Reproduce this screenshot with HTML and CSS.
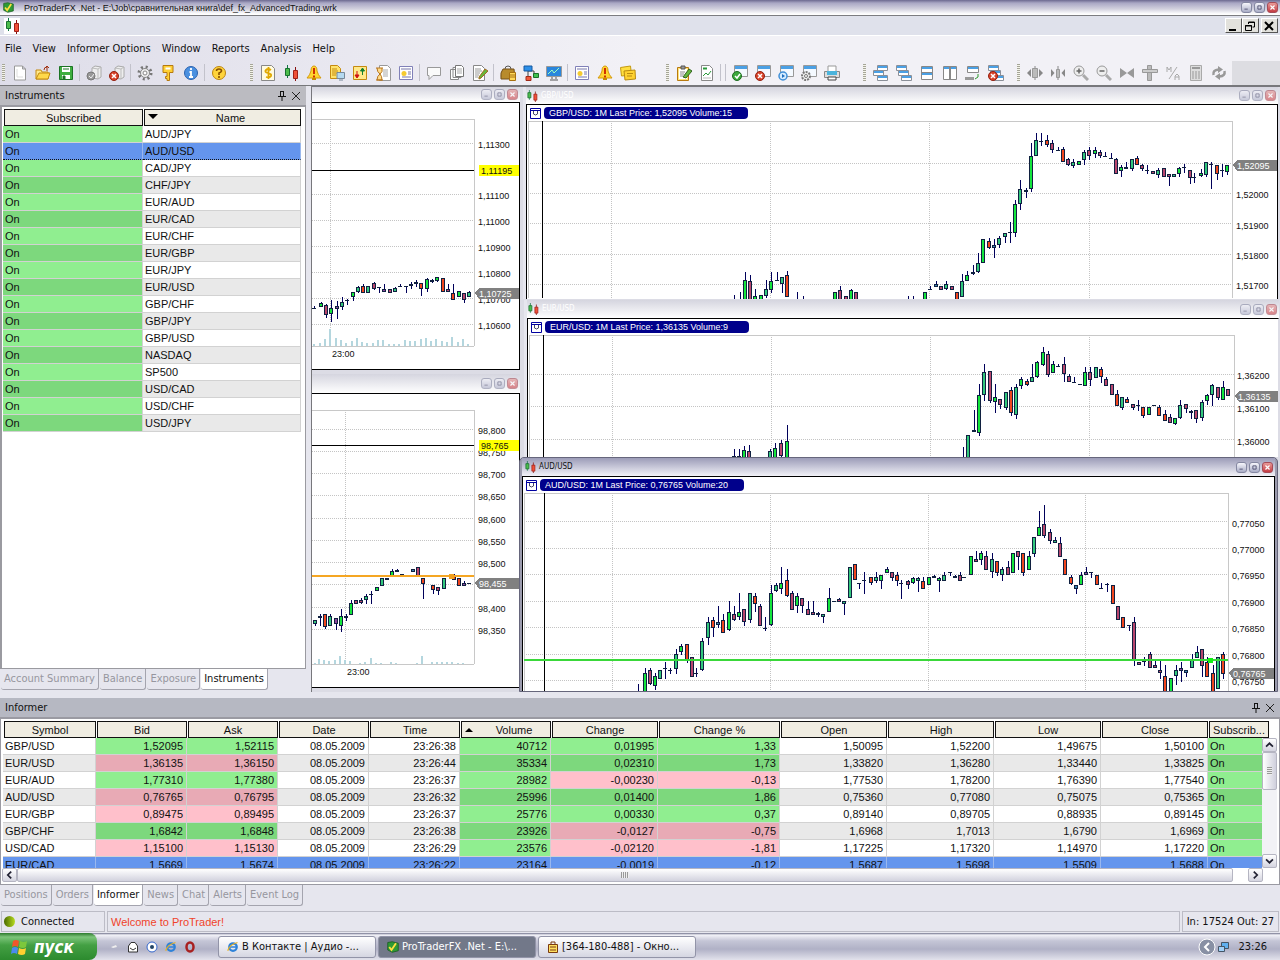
FILE: index.html
```
<!DOCTYPE html>
<html lang="en">

<head>
  <meta charset="UTF-8">
  <meta name="viewport" content="width=device-width, initial-scale=1.0">
  <title>ProTraderFX .Net</title>
  <link rel="stylesheet" href="styles.css">
</head>

<body>
  <svg class="sprite" aria-hidden="true">
    <symbol id="i-doc" viewBox="0 0 16 16"><path d="M2.5 1h8l3 3v11h-11zM10.5 1v3h3" fill="#fff" stroke="#999"/><path d="M5 4v8h6" fill="none" stroke="#ddd"/></symbol>
    <symbol id="i-open" viewBox="0 0 16 16"><path d="M1 14V5h5l1 2h6v7z" fill="#ffe98a" stroke="#c48a10"/><path d="M1 14l3-6h11l-2 6z" fill="#ffd84a" stroke="#c48a10"/><path d="M9 5q0-3 3-3M12 6V1M10 3l2-2 2 2" fill="none" stroke="#a03010"/></symbol>
    <symbol id="i-save" viewBox="0 0 16 16"><path d="M1.5 1.5h13v13h-13z" fill="#3fae3f" stroke="#1c7424"/><path d="M4 2h8v5H4zM4 10h8v4H4z" fill="#fff"/><path d="M5 4h6M5 11h2v3H5z" stroke="#1c7424" fill="#1c7424"/></symbol>
    <symbol id="i-db" viewBox="0 0 16 16"><path d="M6 3l3-2 6 1v10l-3 2-6-1z" fill="#eee" stroke="#aaa"/><path d="M6 3l6 1 3-2M12 4v10" fill="none" stroke="#bbb"/></symbol>
    <symbol id="i-ok-gray" viewBox="0 0 16 16"><use href="#i-db"/><circle cx="5" cy="11" r="4" fill="#999" stroke="#777"/><path d="M3 11l2 2 3-4" fill="none" stroke="#eee"/></symbol>
    <symbol id="i-stop" viewBox="0 0 16 16"><use href="#i-db"/><use href="#b-x"/></symbol>
    <symbol id="b-x" viewBox="0 0 16 16"><circle cx="5" cy="11" r="4.5" fill="#d8432a" stroke="#932010"/><path d="M3 9l4 4M7 9l-4 4" stroke="#fff" stroke-width="1.5"/></symbol>
    <symbol id="i-gear" viewBox="0 0 16 16"><circle cx="8" cy="8" r="6" fill="none" stroke="#777" stroke-width="3" stroke-dasharray="2 2.7"/><circle cx="8" cy="8" r="4.5" fill="#eee" stroke="#888"/><circle cx="8" cy="8" r="2" fill="#fff" stroke="#888"/></symbol>
    <symbol id="i-key" viewBox="0 0 16 16"><path d="M3 .5h10v7H9.5v8H7v-2H5.5v-2H7v-4H3z" fill="#ffd034" stroke="#b67a10"/><path d="M5.5 3.5h5" stroke="#fff" stroke-width="2"/></symbol>
    <symbol id="i-info" viewBox="0 0 16 16"><circle cx="8" cy="8" r="6.5" fill="#4a90e0" stroke="#2b62ae"/><path d="M8 3v2M6.5 7H8v5M6 12h4" stroke="#fff" stroke-width="1.8" fill="none"/></symbol>
    <symbol id="i-help" viewBox="0 0 16 16"><circle cx="8" cy="8" r="6.5" fill="#ffd43c" stroke="#bd8510"/><path d="M5.5 6q0-2 2.5-2t2.5 2Q10 7.5 8 8v2M8 11v2" stroke="#875000" stroke-width="1.6" fill="none"/></symbol>
    <symbol id="i-dollar" viewBox="0 0 16 16"><path d="M1.5.5h10l3 3v12h-13z" fill="#fffbe0" stroke="#888"/><path d="M11 5Q8 3 6 5t2 3 3 3-5 1M8.5 2v12" fill="none" stroke="#e0a800" stroke-width="1.8"/></symbol>
    <symbol id="i-candles" viewBox="0 0 16 16"><path d="M4.5 0v13" stroke="#174"/><path d="M2.5 3.5h4v7h-4z" fill="#4cbc4c" stroke="#187030"/><path d="M12.5 2v14" stroke="#811"/><path d="M10.5 5.5h4v8h-4z" fill="#f05038" stroke="#a02018"/></symbol>
    <symbol id="i-bell" viewBox="0 0 16 16"><path d="M8 1q3 0 3 5 1 4 4 7H1q3-3 4-7 0-5 3-5z" fill="#ffd630" stroke="#d59a10"/><path d="M6 14h4" stroke="#c88a00" stroke-width="2"/><path d="M8 3v6M8 10.5v2" stroke="#d03000" stroke-width="2"/></symbol>
    <symbol id="i-quote" viewBox="0 0 16 16"><path d="M1.5.5h7l3 3v10h-10z" fill="#ffe36a" stroke="#c58a10"/><path d="M3 4h5M3 6h6M3 8h5M3 10h4" stroke="#c58a10"/><path d="M8 7.5h7.5v6H8z" fill="#b5d9f0" stroke="#789"/><path d="M10 15h4" stroke="#789"/></symbol>
    <symbol id="i-updown" viewBox="0 0 16 16"><path d="M1.5 1.5h13v13h-13z" fill="#ffe98a" stroke="#c58a10"/><path d="M5 6v6M3 10l2 3 2-3z" stroke="#d01010" fill="#d01010"/><path d="M10.5 10V5M8.5 6l2-3 2 3z" stroke="#138030" fill="#138030"/></symbol>
    <symbol id="i-glass" viewBox="0 0 16 16"><path d="M4.5.5h8l3 3v12h-11z" fill="#fff" stroke="#999"/><path d="M8 5h5M8 7h5M8 9h5M8 11h5" stroke="#aaa"/><path d="M1 3h7M1 15h7M2 3q0 4 3 6-3 2-3 6h5q0-4-2-6 3-2 2-6" fill="#ffdc8a" stroke="#b8741c"/></symbol>
    <symbol id="i-news" viewBox="0 0 16 16"><path d="M1.5 1.5h13v13h-13z" fill="#fff" stroke="#8080b8"/><path d="M3 4h10M10 7h3M10 9h3M4 12h9" stroke="#7777aa"/><circle cx="6" cy="8.5" r="2.5" fill="#f5cb30"/></symbol>
    <symbol id="i-chat" viewBox="0 0 16 16"><path d="M1.5 2.5h13v8H7l-4 4v-4H1.5z" fill="#fafafa" stroke="#999"/></symbol>
    <symbol id="i-docs" viewBox="0 0 16 16"><path d="M1.5 4.5h8v10h-8zM4 2.5h8v10H4z" fill="#fff" stroke="#888"/><path d="M6.5.5h6l2 2v9h-8z" fill="#fff" stroke="#777"/><path d="M8 4h5M8 6h5M8 8h5" stroke="#aaa"/></symbol>
    <symbol id="i-edit" viewBox="0 0 16 16"><path d="M1.5.5h8l3 3v12h-11z" fill="#fff" stroke="#888"/><path d="M3 4h6M3 6h7M3 8h5M3 10h4M3 12h3" stroke="#999"/><path d="M7 12l6-8 3 2-7 7-2 1z" fill="#63b83c" stroke="#a36a20"/></symbol>
    <symbol id="i-purse" viewBox="0 0 16 16"><path d="M5 4q0-3 3-3t3 3" fill="none" stroke="#555"/><path d="M3 4h11l1 10H1q-1-7 2-10z" fill="#b88b2c" stroke="#75501a"/><path d="M9.5 7.5h6v8h-6z" fill="#ffd95a" stroke="#a87010"/><path d="M10 10h5M10 12h5" stroke="#a87010"/></symbol>
    <symbol id="i-nodes" viewBox="0 0 16 16"><path d="M5 4v9M5 6h6v5" fill="none" stroke="#444"/><path d="M1 1h8v5H1z" fill="#2c8fe8" stroke="#1558a0"/><path d="M10.5 8.5h5v4h-5z" fill="#40c050" stroke="#187028"/><path d="M3 11.5h5v4H3z" fill="#f05a3c" stroke="#a02a18"/></symbol>
    <symbol id="i-monitor" viewBox="0 0 16 16"><path d="M.5 1.5h15v10H.5z" fill="#2a86dc" stroke="#999"/><path d="M2 9l4-4 2 3 5-5" fill="none" stroke="#9fffc0"/><path d="M6 12v2M10 12v2M4 15h8" stroke="#555"/></symbol>
    <symbol id="i-notes" viewBox="0 0 16 16"><path d="M.5 2.5l10-1.5 1 9-10 1z" fill="#ffdf40" stroke="#c49a10"/><path d="M4 6l11-1 .5 9-10.5 1z" fill="#ffd230" stroke="#b98b10"/><path d="M7 8.5h6M7 11h5" stroke="#b98b10"/></symbol>
    <symbol id="i-clip" viewBox="0 0 16 16"><path d="M1.5 2.5h11v13h-11z" fill="#ffe37a" stroke="#b87a10"/><path d="M3 4h8v10H3z" fill="#fff"/><path d="M5 1h4v3H5z" fill="#999" stroke="#555"/><path d="M4 7h5M4 9h4M4 11h3" stroke="#888"/><path d="M7 12l6-8 3 2-6 7z" fill="#63b83c" stroke="#336020"/></symbol>
    <symbol id="i-report" viewBox="0 0 16 16"><path d="M2.5.5h8l3 3v12h-11z" fill="#fff" stroke="#888"/><path d="M4 3.5h4" stroke="#2a9a3a" stroke-width="2"/><path d="M4 11l3-3 2 2 3-4" fill="none" stroke="#2a9a3a"/><path d="M4 13h8" stroke="#bbb"/></symbol>
    <symbol id="i-win" viewBox="0 0 16 16"><path d="M2.5.5h13v11h-13z" fill="#f4f9ff" stroke="#999"/><path d="M3 1h12v3H3z" fill="#4ba0e4"/></symbol>
    <symbol id="i-win-ok" viewBox="0 0 16 16"><use href="#i-win"/><circle cx="5" cy="11" r="4.5" fill="#3ca83c" stroke="#1d6c20"/><path d="M3 11l2 2 3-4" fill="none" stroke="#fff" stroke-width="1.5"/></symbol>
    <symbol id="i-win-x" viewBox="0 0 16 16"><use href="#i-win"/><use href="#b-x"/></symbol>
    <symbol id="i-win-play" viewBox="0 0 16 16"><use href="#i-win"/><circle cx="5" cy="11" r="4" fill="#d6ecff" stroke="#3f8fd8" stroke-width="1.5"/><path d="M4 9l3 2-3 2z" fill="#2070c0"/></symbol>
    <symbol id="i-win-gear" viewBox="0 0 16 16"><use href="#i-win"/><circle cx="5" cy="11" r="4" fill="#eee" stroke="#777" stroke-width="2" stroke-dasharray="2 1"/><circle cx="5" cy="11" r="1.5" fill="#fff" stroke="#777"/></symbol>
    <symbol id="i-print" viewBox="0 0 16 16"><path d="M4 6V1h8v5" fill="#fff" stroke="#999"/><path d="M.5 6.5h15v6H.5z" fill="#ddd" stroke="#888"/><path d="M3 6h10v4H3z" fill="#4bb4dc"/><path d="M4 12h8v3H4z" fill="#fff" stroke="#444"/></symbol>
    <symbol id="i-mini" viewBox="0 0 11 6"><path d="M.5.5h10v5H.5z" fill="#fff" stroke="#8a8f98"/><path d="M1 1h9v2H1z" fill="#4ba0e4"/></symbol>
    <symbol id="i-cascade" viewBox="0 0 16 16"><use href="#i-mini" x="4" y="0" width="11" height="6"/><use href="#i-mini" x="0" y="5" width="11" height="6"/><use href="#i-mini" x="4" y="10" width="11" height="6"/></symbol>
    <symbol id="i-cascade2" viewBox="0 0 16 16"><use href="#i-mini" x="0" y="0" width="11" height="6"/><use href="#i-mini" x="2" y="5" width="11" height="6"/><use href="#i-mini" x="5" y="10" width="11" height="6"/></symbol>
    <symbol id="i-tileh" viewBox="0 0 16 16"><path d="M2.5 1.5h11v13h-11z" fill="#fff" stroke="#888"/><path d="M3 3h10M3 9h10" stroke="#4ba0e4" stroke-width="2"/><path d="M3 7.5h10" stroke="#888"/></symbol>
    <symbol id="i-tilev" viewBox="0 0 16 16"><path d="M1.5 1.5h13v13h-13z" fill="#fff" stroke="#888"/><path d="M2 3h12" stroke="#4ba0e4" stroke-width="2"/><path d="M8 2v12" stroke="#888" stroke-width="2"/></symbol>
    <symbol id="i-restore" viewBox="0 0 16 16"><path d="M2.5 1.5h11v6h-11z" fill="#fff" stroke="#888"/><path d="M3 3h10" stroke="#4ba0e4" stroke-width="2"/><path d="M0 13.5h9" stroke="#999" stroke-width="3"/><path d="M13 9v3l-3 2" fill="none" stroke="#2c9a2c"/></symbol>
    <symbol id="i-closeall" viewBox="0 0 16 16"><use href="#i-cascade2"/><use href="#b-x"/></symbol>
    <symbol id="i-wide" viewBox="0 0 16 16"><path d="M8 1v14" stroke="#888"/><path d="M5.5 3.5h5v9h-5z" fill="#bbb" stroke="#999"/><path d="M0 8l4-4v8zM16 8l-4-4v8z" fill="#888"/></symbol>
    <symbol id="i-narrow" viewBox="0 0 16 16"><path d="M8 1v14" stroke="#888"/><path d="M6.5 4.5h3v8h-3z" fill="#bbb" stroke="#999"/><path d="M4.5 8L1 4v8zM11.5 8L15 4v8z" fill="#888"/></symbol>
    <symbol id="i-zoomin" viewBox="0 0 16 16"><circle cx="6" cy="6" r="5" fill="#eee" stroke="#999"/><path d="M3.5 6h5M6 3.5v5" stroke="#666" stroke-width="1.5"/><path d="M10 10l5 5" stroke="#aaa" stroke-width="3"/></symbol>
    <symbol id="i-zoomout" viewBox="0 0 16 16"><circle cx="6" cy="6" r="5" fill="#eee" stroke="#999"/><path d="M3.5 6h5" stroke="#666" stroke-width="1.5"/><path d="M10 10l5 5" stroke="#aaa" stroke-width="3"/></symbol>
    <symbol id="i-meet" viewBox="0 0 16 16"><path d="M1 3l7 5-7 5zM15 3L8 8l7 5z" fill="#999"/></symbol>
    <symbol id="i-cross" viewBox="0 0 16 16"><path d="M5.5.5h4v15h-4z" fill="#bbb" stroke="#999"/><path d="M.5 4.5h15v3H.5z" fill="#ccc" stroke="#999"/></symbol>
    <symbol id="i-ma" viewBox="0 0 16 16"><path d="M2 7V2l2 3 2-3v5M12 2L4 14M10 15v-4l2-2 2 2v4M10 12h4" fill="none" stroke="#aaa"/></symbol>
    <symbol id="i-calc" viewBox="0 0 16 16"><path d="M2.5.5h11v15h-11z" fill="#ddd" stroke="#aaa"/><path d="M4 3h8" stroke="#999" stroke-width="2"/><path d="M4 7h8M4 9h8M4 11h8M4 13h8" stroke="#999" stroke-dasharray="2 1"/></symbol>
    <symbol id="i-refresh" viewBox="0 0 16 16"><path d="M2.5 10q-1-5 5-5.5M13.5 6q1 5-5 5.5" fill="none" stroke="#999" stroke-width="2.5"/><path d="M7 1l5 3.5L7 8zM9 8l-5 3.5L9 15z" fill="#999"/></symbol>
    <symbol id="i-app" viewBox="0 0 16 16"><path d="M1 2l6-1 8 2v10l-8 2-6-3z" fill="#2f9a35" stroke="#14581a"/><path d="M3 8l3 4 6-9" fill="none" stroke="#ffe040" stroke-width="2.5"/></symbol>
    <symbol id="i-ie" viewBox="0 0 16 16"><circle cx="8" cy="8" r="5" fill="none" stroke="#2f82d8" stroke-width="3"/><path d="M4 8h9" stroke="#2f82d8" stroke-width="2"/><path d="M1 13Q3 5 14 2" fill="none" stroke="#e8b020" stroke-width="1.5"/></symbol>
    <symbol id="i-pin" viewBox="0 0 10 10"><path d="M3 .5h4M3.5 0v5M6.5 0v5M1 5.5h8M5 6v4" fill="none" stroke="#111"/></symbol>
    <symbol id="i-close" viewBox="0 0 10 10"><path d="M1 1l8 8M9 1L1 9" stroke="#222"/></symbol>
    <symbol id="c-min" viewBox="0 0 11 11"><path d="M3 7.5h4" stroke="#446"/></symbol>
    <symbol id="c-max" viewBox="0 0 11 11"><path d="M3.5 3.5h4v4h-4z" fill="none" stroke="#446"/></symbol>
    <symbol id="c-close" viewBox="0 0 11 11"><path d="M3 3l5 5M8 3L3 8" stroke="#fff" stroke-width="1.5"/></symbol>
    <symbol id="i-menu" viewBox="0 0 11 11"><path d="M.5.5h10v10H.5z" fill="#fff" stroke="#0000a0"/><path d="M1 2.5h9" stroke="#0000a0"/><path d="M3.5 3v3q2 2 4 0V3" fill="none" stroke="#446"/></symbol>
  </svg>

  <header class="titlebar">
    <svg class="app-icon"><use href="#i-app"/></svg>
    <h1>ProTraderFX .Net - E:\Job\сравнительная книга\def_fx_AdvancedTrading.wrk</h1>
    <div class="caps">
      <button class="cap" aria-label="Minimize"><svg><use href="#c-min"/></svg></button>
      <button class="cap" aria-label="Restore"><svg><use href="#c-max"/></svg></button>
      <button class="cap cap-close" aria-label="Close"><svg><use href="#c-close"/></svg></button>
    </div>
  </header>

  <div class="childbar">
    <span class="child-icon"><svg class="icon"><use href="#i-candles"/></svg></span>
    <div class="classic-caps">
      <button aria-label="Minimize child"><svg viewBox="0 0 14 12"><path d="M3 10h7" stroke="#000" stroke-width="2"/></svg></button>
      <button aria-label="Restore child"><svg viewBox="0 0 14 12"><path d="M5.5 4V2h6v5h-2M5 2.5h7M2.5 5.5h6v5h-6zM2 6h7" fill="none" stroke="#000"/></svg></button>
      <button class="apart" aria-label="Close child"><svg viewBox="0 0 14 12"><path d="M3 2l8 8M11 2l-8 8" stroke="#000" stroke-width="2"/></svg></button>
    </div>
  </div>

  <nav class="menu">
    <button>File</button>
    <button>View</button>
    <button>Informer Options</button>
    <button>Window</button>
    <button>Reports</button>
    <button>Analysis</button>
    <button>Help</button>
  </nav>

  <div class="toolbar">
    <div class="tools">
      <button aria-label="New"><svg class="icon"><use href="#i-doc"/></svg></button>
      <button aria-label="Open"><svg class="icon"><use href="#i-open"/></svg></button>
      <button aria-label="Save"><svg class="icon"><use href="#i-save"/></svg></button>
      <i></i>
      <button aria-label="Connect"><svg class="icon"><use href="#i-ok-gray"/></svg></button>
      <button aria-label="Disconnect"><svg class="icon"><use href="#i-stop"/></svg></button>
      <i></i>
      <button aria-label="Settings"><svg class="icon"><use href="#i-gear"/></svg></button>
      <button aria-label="Password"><svg class="icon"><use href="#i-key"/></svg></button>
      <button aria-label="About"><svg class="icon"><use href="#i-info"/></svg></button>
      <i></i>
      <button aria-label="Help topics"><svg class="icon"><use href="#i-help"/></svg></button>
    </div>
    <div class="tools gap-m">
      <button aria-label="Accounts"><svg class="icon"><use href="#i-dollar"/></svg></button>
      <button aria-label="Chart"><svg class="icon"><use href="#i-candles"/></svg></button>
      <button aria-label="Alert"><svg class="icon"><use href="#i-bell"/></svg></button>
      <button aria-label="Quotes"><svg class="icon"><use href="#i-quote"/></svg></button>
      <button aria-label="Order"><svg class="icon"><use href="#i-updown"/></svg></button>
      <button aria-label="History"><svg class="icon"><use href="#i-glass"/></svg></button>
      <button aria-label="News"><svg class="icon"><use href="#i-news"/></svg></button>
      <i></i>
      <button aria-label="Chat"><svg class="icon"><use href="#i-chat"/></svg></button>
      <button aria-label="Copies"><svg class="icon"><use href="#i-docs"/></svg></button>
      <button aria-label="Edit"><svg class="icon"><use href="#i-edit"/></svg></button>
      <i></i>
      <button aria-label="Funds"><svg class="icon"><use href="#i-purse"/></svg></button>
      <button aria-label="Links"><svg class="icon"><use href="#i-nodes"/></svg></button>
      <button aria-label="Monitor"><svg class="icon"><use href="#i-monitor"/></svg></button>
      <i></i>
      <button aria-label="News list"><svg class="icon"><use href="#i-news"/></svg></button>
      <button aria-label="Alert list"><svg class="icon"><use href="#i-bell"/></svg></button>
      <button aria-label="Notes"><svg class="icon"><use href="#i-notes"/></svg></button>
    </div>
    <div class="tools gap-l">
      <button aria-label="Orders sheet"><svg class="icon"><use href="#i-clip"/></svg></button>
      <button aria-label="Report"><svg class="icon"><use href="#i-report"/></svg></button>
      <i></i><i></i>
      <button aria-label="Accept layout"><svg class="icon"><use href="#i-win-ok"/></svg></button>
      <button aria-label="Remove layout"><svg class="icon"><use href="#i-win-x"/></svg></button>
      <button aria-label="Run layout"><svg class="icon"><use href="#i-win-play"/></svg></button>
      <button aria-label="Layout settings"><svg class="icon"><use href="#i-win-gear"/></svg></button>
      <button aria-label="Print"><svg class="icon"><use href="#i-print"/></svg></button>
    </div>
    <div class="tools gap-m">
      <button aria-label="Arrange"><svg class="icon"><use href="#i-cascade"/></svg></button>
      <button aria-label="Cascade"><svg class="icon"><use href="#i-cascade2"/></svg></button>
      <button aria-label="Tile horizontally"><svg class="icon"><use href="#i-tileh"/></svg></button>
      <button aria-label="Tile vertically"><svg class="icon"><use href="#i-tilev"/></svg></button>
      <button aria-label="Restore all"><svg class="icon"><use href="#i-restore"/></svg></button>
      <button aria-label="Close all"><svg class="icon"><use href="#i-closeall"/></svg></button>
    </div>
    <div class="tools gap-s">
      <button aria-label="Widen candles"><svg class="icon"><use href="#i-wide"/></svg></button>
      <button aria-label="Narrow candles"><svg class="icon"><use href="#i-narrow"/></svg></button>
      <button aria-label="Zoom in"><svg class="icon"><use href="#i-zoomin"/></svg></button>
      <button aria-label="Zoom out"><svg class="icon"><use href="#i-zoomout"/></svg></button>
      <button aria-label="Fit"><svg class="icon"><use href="#i-meet"/></svg></button>
      <button aria-label="Crosshair"><svg class="icon"><use href="#i-cross"/></svg></button>
      <button aria-label="Moving average"><svg class="icon"><use href="#i-ma"/></svg></button>
      <button aria-label="Calculator"><svg class="icon"><use href="#i-calc"/></svg></button>
      <button aria-label="Refresh"><svg class="icon"><use href="#i-refresh"/></svg></button>
    </div>
    <div class="tools-rest"></div>
  </div>

  <main class="workspace">
    <section class="side">
      <div class="panel-title">
        <h2>Instruments</h2>
        <button aria-label="Pin instruments"><svg><use href="#i-pin"/></svg></button>
        <button aria-label="Close instruments"><svg><use href="#i-close"/></svg></button>
      </div>
      <div class="side-body">
        <table class="grid instruments">
          <colgroup><col class="c-sub"><col></colgroup>
          <thead><tr><th>Subscribed</th><th class="sorted"><b class="arrow arrow-down"></b>Name</th></tr></thead>
          <tbody>
            <tr><td>On</td><td>AUD/JPY</td></tr>
            <tr class="selected"><td>On</td><td>AUD/USD</td></tr>
            <tr><td>On</td><td>CAD/JPY</td></tr>
            <tr><td>On</td><td>CHF/JPY</td></tr>
            <tr><td>On</td><td>EUR/AUD</td></tr>
            <tr><td>On</td><td>EUR/CAD</td></tr>
            <tr><td>On</td><td>EUR/CHF</td></tr>
            <tr><td>On</td><td>EUR/GBP</td></tr>
            <tr><td>On</td><td>EUR/JPY</td></tr>
            <tr><td>On</td><td>EUR/USD</td></tr>
            <tr><td>On</td><td>GBP/CHF</td></tr>
            <tr><td>On</td><td>GBP/JPY</td></tr>
            <tr><td>On</td><td>GBP/USD</td></tr>
            <tr><td>On</td><td>NASDAQ</td></tr>
            <tr><td>On</td><td>SP500</td></tr>
            <tr><td>On</td><td>USD/CAD</td></tr>
            <tr><td>On</td><td>USD/CHF</td></tr>
            <tr><td>On</td><td>USD/JPY</td></tr>
          </tbody>
        </table>
      </div>
      <div class="tabs">
        <button>Account Summary</button>
        <button>Balance</button>
        <button>Exposure</button>
        <button class="active">Instruments</button>
      </div>
    </section>

    <section class="mdi">
      <article class="win w1">
        <div class="win-title">
          <div class="caps">
            <button class="cap" aria-label="Minimize"><svg><use href="#c-min"/></svg></button>
            <button class="cap" aria-label="Maximize"><svg><use href="#c-max"/></svg></button>
            <button class="cap cap-close" aria-label="Close"><svg><use href="#c-close"/></svg></button>
          </div>
        </div>
        <div class="win-body"><svg class="chart" id="chart1" width="207" height="266" viewBox="12 19 207 266"></svg></div>
      </article>

      <article class="win w2">
        <div class="win-title">
          <div class="caps">
            <button class="cap" aria-label="Minimize"><svg><use href="#c-min"/></svg></button>
            <button class="cap" aria-label="Maximize"><svg><use href="#c-max"/></svg></button>
            <button class="cap cap-close" aria-label="Close"><svg><use href="#c-close"/></svg></button>
          </div>
        </div>
        <div class="win-body"><svg class="chart" id="chart2" width="207" height="293" viewBox="12 24 207 293"></svg></div>
      </article>

      <article class="win w3">
        <div class="win-title">
          <svg class="win-icon"><use href="#i-candles"/></svg><h3>GBP/USD</h3>
          <div class="caps">
            <button class="cap" aria-label="Minimize"><svg><use href="#c-min"/></svg></button>
            <button class="cap" aria-label="Maximize"><svg><use href="#c-max"/></svg></button>
            <button class="cap cap-close" aria-label="Close"><svg><use href="#c-close"/></svg></button>
          </div>
        </div>
        <div class="win-body">
          <svg class="chart" id="chart3" width="750" height="194" viewBox="7 21 750 194"></svg>
          <div class="legend"><button aria-label="Chart menu"><svg><use href="#i-menu"/></svg></button><span>GBP/USD: 1M Last Price: 1,52095 Volume:15</span></div>
        </div>
      </article>

      <article class="win w4">
        <div class="win-title">
          <svg class="win-icon"><use href="#i-candles"/></svg><h3>EUR/USD</h3>
          <div class="caps">
            <button class="cap" aria-label="Minimize"><svg><use href="#c-min"/></svg></button>
            <button class="cap" aria-label="Maximize"><svg><use href="#c-max"/></svg></button>
            <button class="cap cap-close" aria-label="Close"><svg><use href="#c-close"/></svg></button>
          </div>
        </div>
        <div class="win-body">
          <svg class="chart" id="chart4" width="750" height="138" viewBox="8 235 750 138"></svg>
          <div class="legend"><button aria-label="Chart menu"><svg><use href="#i-menu"/></svg></button><span>EUR/USD: 1M Last Price: 1,36135 Volume:9</span></div>
        </div>
      </article>

      <article class="win w5 focused">
        <div class="win-title">
          <svg class="win-icon"><use href="#i-candles"/></svg><h3>AUD/USD</h3>
          <div class="caps">
            <button class="cap" aria-label="Minimize"><svg><use href="#c-min"/></svg></button>
            <button class="cap" aria-label="Maximize"><svg><use href="#c-max"/></svg></button>
            <button class="cap cap-close" aria-label="Close"><svg><use href="#c-close"/></svg></button>
          </div>
        </div>
        <div class="win-body">
          <svg class="chart" id="chart5" width="751" height="214" viewBox="8 22 751 214"></svg>
          <div class="legend"><button aria-label="Chart menu"><svg><use href="#i-menu"/></svg></button><span>AUD/USD: 1M Last Price: 0,76765 Volume:20</span></div>
        </div>
      </article>
    </section>
  </main>

  <section class="informer">
    <div class="panel-title">
      <h2>Informer</h2>
      <button aria-label="Pin informer"><svg><use href="#i-pin"/></svg></button>
      <button aria-label="Close informer"><svg><use href="#i-close"/></svg></button>
    </div>
    <div class="quotes">
      <div class="quotes-view">
        <table class="grid rates">
          <colgroup>
            <col class="c-sym"><col class="c-std"><col class="c-std"><col class="c-std"><col class="c-std"><col class="c-std">
            <col class="c-wide"><col class="c-pct"><col class="c-wide"><col class="c-wide"><col class="c-wide"><col class="c-wide"><col class="c-last">
          </colgroup>
          <thead>
            <tr><th>Symbol</th><th>Bid</th><th>Ask</th><th>Date</th><th>Time</th><th class="sorted"><b class="arrow arrow-up"></b>Volume</th><th>Change</th><th>Change %</th><th>Open</th><th>High</th><th>Low</th><th>Close</th><th>Subscrib...</th></tr>
          </thead>
          <tbody>
            <tr><td>GBP/USD</td><td class="up">1,52095</td><td class="up">1,52115</td><td>08.05.2009</td><td>23:26:38</td><td class="up">40712</td><td class="up">0,01995</td><td class="up">1,33</td><td>1,50095</td><td>1,52200</td><td>1,49675</td><td>1,50100</td><td class="up">On</td></tr>
            <tr><td>EUR/USD</td><td class="dn">1,36135</td><td class="dn">1,36150</td><td>08.05.2009</td><td>23:26:44</td><td class="up">35334</td><td class="up">0,02310</td><td class="up">1,73</td><td>1,33820</td><td>1,36280</td><td>1,33440</td><td>1,33825</td><td class="up">On</td></tr>
            <tr><td>EUR/AUD</td><td class="up">1,77310</td><td class="up">1,77380</td><td>08.05.2009</td><td>23:26:37</td><td class="up">28982</td><td class="dn">-0,00230</td><td class="dn">-0,13</td><td>1,77530</td><td>1,78200</td><td>1,76390</td><td>1,77540</td><td class="up">On</td></tr>
            <tr><td>AUD/USD</td><td class="dn">0,76765</td><td class="dn">0,76795</td><td>08.05.2009</td><td>23:26:32</td><td class="up">25996</td><td class="up">0,01400</td><td class="up">1,86</td><td>0,75360</td><td>0,77080</td><td>0,75075</td><td>0,75365</td><td class="up">On</td></tr>
            <tr><td>EUR/GBP</td><td class="dn">0,89475</td><td class="dn">0,89495</td><td>08.05.2009</td><td>23:26:37</td><td class="up">25776</td><td class="up">0,00330</td><td class="up">0,37</td><td>0,89140</td><td>0,89705</td><td>0,88935</td><td>0,89145</td><td class="up">On</td></tr>
            <tr><td>GBP/CHF</td><td class="up">1,6842</td><td class="up">1,6848</td><td>08.05.2009</td><td>23:26:38</td><td class="up">23926</td><td class="dn">-0,0127</td><td class="dn">-0,75</td><td>1,6968</td><td>1,7013</td><td>1,6790</td><td>1,6969</td><td class="up">On</td></tr>
            <tr><td>USD/CAD</td><td class="dn">1,15100</td><td class="dn">1,15130</td><td>08.05.2009</td><td>23:26:29</td><td class="up">23576</td><td class="dn">-0,02120</td><td class="dn">-1,81</td><td>1,17225</td><td>1,17320</td><td>1,14970</td><td>1,17220</td><td class="up">On</td></tr>
            <tr class="selected"><td>EUR/CAD</td><td>1,5669</td><td>1,5674</td><td>08.05.2009</td><td>23:26:22</td><td>23164</td><td>-0,0019</td><td>-0,12</td><td>1,5687</td><td>1,5698</td><td>1,5509</td><td>1,5688</td><td>On</td></tr>
          </tbody>
        </table>
        <div class="vscroll">
          <button aria-label="Scroll up"><svg viewBox="0 0 14 14"><path d="M3 9l4-4 4 4" fill="none" stroke="#223" stroke-width="2"/></svg></button>
          <div class="vthumb"></div>
          <button aria-label="Scroll down"><svg viewBox="0 0 14 14"><path d="M3 5l4 4 4-4" fill="none" stroke="#223" stroke-width="2"/></svg></button>
        </div>
      </div>
      <div class="hscroll">
        <button aria-label="Scroll left"><svg viewBox="0 0 14 14"><path d="M9 3L5 7l4 4" fill="none" stroke="#223" stroke-width="2"/></svg></button>
        <div class="hthumb"></div>
        <button aria-label="Scroll right"><svg viewBox="0 0 14 14"><path d="M5 3l4 4-4 4" fill="none" stroke="#223" stroke-width="2"/></svg></button>
      </div>
    </div>
    <div class="tabs">
      <button>Positions</button>
      <button>Orders</button>
      <button class="active">Informer</button>
      <button>News</button>
      <button>Chat</button>
      <button>Alerts</button>
      <button>Event Log</button>
    </div>
  </section>

  <footer class="status">
    <div class="conn"><span class="led"></span>Connected</div>
    <div class="welcome">Welcome to ProTrader!</div>
    <div class="traffic">In: 17524 Out: 27</div>
  </footer>

  <div class="taskbar">
    <button class="start">
      <svg viewBox="0 0 20 20"><path d="M3 4q3-2 6 0L8 10q-3-2-6 0z" fill="#f0562c"/><path d="M10 4q4 2 7 0l-1 6q-3 2-7 0z" fill="#7cc83c"/><path d="M2 11q3-2 6 0l-1 6q-3-2-6 0z" fill="#4a8af0"/><path d="M9 11q4 2 7 0l-1 6q-3 2-7 0z" fill="#ffd030"/></svg>
      пуск
    </button>
    <div class="quick">
      <button aria-label="Show desktop"><svg viewBox="0 0 12 12"><path d="M3 6l5-2 1 2-4 1z" fill="#eee"/></svg></button>
      <button aria-label="Mail"><svg viewBox="0 0 12 12"><path d="M1.5 11V5L4 1.5h4L10.5 5v6z" fill="#fff" stroke="#333"/><path d="M3 7l3 2 3-2" fill="none" stroke="#333"/></svg></button>
      <button aria-label="Player"><svg viewBox="0 0 12 12"><circle cx="6" cy="6" r="5" fill="#fff" stroke="#36c"/><circle cx="6" cy="6" r="2" fill="#246"/></svg></button>
      <button aria-label="Internet Explorer"><svg><use href="#i-ie"/></svg></button>
      <button aria-label="Browser"><svg viewBox="0 0 12 12"><ellipse cx="6" cy="6" rx="3.5" ry="4.5" fill="none" stroke="#a82020" stroke-width="2.5"/></svg></button>
    </div>
    <div class="tasks">
      <button><svg><use href="#i-ie"/></svg>В Контакте | Аудио -...</button>
      <button class="pressed"><svg><use href="#i-app"/></svg>ProTraderFX .Net - E:\...</button>
      <button><svg viewBox="0 0 12 12"><path d="M1.5 3.5h9v8h-9z" fill="#ffe060" stroke="#7a3a10"/><path d="M4 3V1h4v2M3 6h6M3 9h6" fill="none" stroke="#7a3a10"/></svg>[364-180-488] - Окно...</button>
    </div>
    <div class="tray">
      <button aria-label="Show hidden icons"><svg viewBox="0 0 18 18"><circle cx="9" cy="9" r="8" fill="#8890a4" stroke="#fff"/><path d="M11 5L7 9l4 4" fill="none" stroke="#fff" stroke-width="2"/></svg></button>
      <svg class="net" viewBox="0 0 12 12"><path d="M3.5 1.5h7v6h-7z" fill="#60b0f0" stroke="#456"/><path d="M.5 5.5h6v5h-6z" fill="#a0d0f8" stroke="#456"/></svg>
      <time>23:26</time>
    </div>
  </div>

  <script src="charts.js"></script>
</body>

</html>
```
FILE: styles.css
```
* {
  margin: 0;
  padding: 0;
  box-sizing: border-box;
}

body {
  display: flex;
  flex-direction: column;
  height: 100vh;
  overflow: hidden;
  background: #e6e6ee;
  color: #111;
  font-family: "DejaVu Sans Condensed", "DejaVu Sans", sans-serif;
  font-size: 11px;
  line-height: 14px;
}

button {
  background: none;
  border: 0;
  color: inherit;
  font: inherit;
}

svg {
  display: block;
}

h1,
h2,
h3 {
  font-size: inherit;
  font-weight: normal;
}

.sprite {
  position: absolute;
  width: 0;
  height: 0;
}

.icon {
  width: 16px;
  height: 16px;
}

/* caption bars */
.titlebar {
  display: flex;
  align-items: center;
  flex: none;
  height: 16px;
  padding: 0 2px 0 3px;
  background: linear-gradient(#6c6990 0, #a9a7c4 3px, #d2d1de 9px, #fff 14px, #fff);
  border-bottom: 1px solid #7c7c80;
}

.titlebar h1 {
  flex: 1;
  padding-left: 10px;
  font-family: "Liberation Sans", Arial, sans-serif;
  font-size: 9px;
  line-height: 12px;
}

.app-icon {
  width: 11px;
  height: 13px;
}

.caps {
  display: flex;
  gap: 2px;
}

.cap {
  width: 11px;
  height: 11px;
  border: 1px solid #8588a2;
  border-radius: 3px;
  background: linear-gradient(#f6f6fc, #a9acc6);
}

.cap svg {
  width: 9px;
  height: 9px;
}

.cap-close {
  border-color: #a64c58;
  background: linear-gradient(#e99a98, #c43b42);
}

.childbar {
  display: flex;
  justify-content: space-between;
  align-items: center;
  flex: none;
  height: 20px;
  padding: 0 2px 0 4px;
  background: #dfe1eb;
  border-bottom: 1px solid #fff;
}

.child-icon {
  background: #fff;
}

.classic-caps {
  display: flex;
}

.classic-caps button {
  width: 17px;
  height: 15px;
  background: #e2e1dc;
  border: 1px solid;
  border-color: #fff #555 #555 #fff;
}

.classic-caps svg {
  width: 14px;
  height: 12px;
}

.classic-caps .apart {
  margin-left: 2px;
}

.menu {
  display: flex;
  flex: none;
  gap: 1px;
  height: 25px;
  background: linear-gradient(90deg, #dedde9, #f2f1f6 50%);
}

.menu button {
  padding: 0 5px;
}

/* tool strips */
.toolbar {
  display: flex;
  flex: none;
  height: 25px;
  background: linear-gradient(90deg, #dedde9, #f2f1f6 50%);
  border-bottom: 1px solid #77787b;
}

.tools {
  display: flex;
  align-items: center;
  height: 23px;
}

.tools::before {
  content: '';
  width: 3px;
  height: 17px;
  margin: 0 3px 0 2px;
  background: repeating-linear-gradient(#a5a598 0, #a5a598 1px, #f4f4ea 1px, #f4f4ea 2px);
}

.tools button {
  display: grid;
  place-items: center;
  width: 23px;
  height: 22px;
}

.tools i {
  width: 1px;
  height: 17px;
  margin: 0 2px;
  background: #c2c2cb;
}

.gap-s {
  margin-left: 8px;
}

.gap-m {
  margin-left: 18px;
}

.gap-l {
  margin-left: 25px;
}

.tools-rest {
  flex: 1;
  margin-left: 2px;
  background: #dddde2;
}

/* docked panels */
.workspace {
  display: flex;
  flex: 1;
  min-height: 0;
}

.side {
  display: flex;
  flex-direction: column;
  flex: none;
  width: 306px;
  margin: 0 5px 6px 0;
}

.panel-title {
  display: flex;
  align-items: center;
  flex: none;
  gap: 4px;
  height: 20px;
  padding: 0 5px;
  background: #bbbbc1;
  border-bottom: 1px solid #9a9aa2;
}

.panel-title h2 {
  flex: 1;
}

.panel-title svg {
  width: 10px;
  height: 10px;
}

.side-body {
  flex: 1;
  padding: 2px 4px 0 1px;
  background: #fff;
  border: 1px solid #9a9aa0;
  border-left-width: 2px;
}

.tabs {
  display: flex;
  flex: none;
  gap: 1px;
  height: 23px;
  padding-left: 1px;
}

.tabs button {
  height: 21px;
  padding: 0 3px;
  color: #96969e;
  border: 1px solid #a4a4ae;
  border-width: 0 1px 1px 0;
  border-radius: 0 0 3px 3px;
}

.tabs .active {
  background: #fff;
  color: #111;
}

/* data grids */
.grid {
  width: 100%;
  table-layout: fixed;
  border-collapse: separate;
  border-spacing: 0;
  font-family: "Liberation Sans", Arial, sans-serif;
}

.grid th {
  position: relative;
  height: 17px;
  background: #f0ede2;
  border-left: 1px solid #fff;
  box-shadow: inset 0 0 0 1px #111;
  background-clip: padding-box;
  font-weight: normal;
  line-height: 16px;
  white-space: nowrap;
}

.grid .sorted {
  padding-left: 16px;
}

.grid td {
  height: 17px;
  padding: 0 3px 0 2px;
  background: #fff;
  border: 1px solid #d2d2d2;
  border-width: 0 1px 1px 0;
  line-height: 16px;
  white-space: nowrap;
  overflow: hidden;
}

.grid tr:nth-child(even) td {
  background: #e9e9e9;
}

.instruments td:first-child,
.grid td.up {
  background: #90ee90;
}

.instruments tr:nth-child(even) td:first-child,
.grid tr:nth-child(even) td.up {
  background: #7dd87d;
}

.grid td.dn {
  background: #ffc0cb;
}

.grid tr:nth-child(even) td.dn {
  background: #e8aab5;
}

.grid tr.selected:nth-child(even) td,
.instruments tr.selected:nth-child(even) td:first-child {
  background: #6495ed;
  border-right-color: #9ab8ee;
}

.instruments .selected td {
  border-bottom: 1px dotted #111;
}

.c-sub {
  width: 140px;
}

.arrow {
  position: absolute;
  left: 4px;
  border: 5px solid transparent;
}

.arrow-down {
  top: 5px;
  border-top-color: #000;
  border-bottom-width: 0;
}

.arrow-up {
  top: 7px;
  border-width: 0 4px 4px;
  border-bottom-color: #000;
}

/* chart windows */
.mdi {
  position: relative;
  flex: 1;
  margin-bottom: 6px;
  overflow: hidden;
  background: #dcdce5;
  border: 1px solid #77777c;
  border-width: 1px 0 0 1px;
}

.win {
  position: absolute;
  background: #e6e6ee;
}

.win-title {
  display: flex;
  align-items: center;
  height: 15px;
  padding-right: 2px;
  background: linear-gradient(#d5d5df, #fff);
}

.win-title h3 {
  padding-left: 3px;
  color: #fff;
  font-size: 8px;
  line-height: 12px;
}

.win-title .caps {
  margin-left: auto;
}

.win:not(.focused) .caps {
  opacity: .6;
}

.win-icon {
  width: 12px;
  height: 12px;
}

.win-body {
  position: relative;
  overflow: hidden;
  background: #fff;
  border: 1px solid #000;
}

.w1 {
  left: 0;
  top: 0;
  width: 208px;
}

.w2 {
  left: 0;
  top: 287px;
  width: 208px;
}

.w1 .win-body,
.w2 .win-body {
  border-left: 0;
}

.w2 .win-title {
  height: 19px;
}

.w3 {
  left: 211px;
  top: 0;
  width: 755px;
  padding-left: 3px;
}

.w3 .win-title {
  height: 17px;
}

.w4 {
  left: 212px;
  top: 213px;
  width: 755px;
  padding-left: 3px;
}

.w4 .win-title {
  height: 18px;
}

.w3 .win-body,
.w4 .win-body,
.w5 .win-body {
  border-bottom: 0;
}

.w4 .win-body {
  border-right-color: #dcdce5;
}

.w5 {
  left: 207px;
  top: 370px;
  width: 759px;
  padding: 0 2px;
  background: #9c9cae;
  border: 1px solid #66667c;
  border-radius: 5px 5px 0 0;
}

.w5 .win-title {
  height: 18px;
  padding-left: 2px;
  background: linear-gradient(#9c9cb8, #f2f2f8);
}

.w5 .win-title h3 {
  color: #111;
}

.chart {
  font-family: "Liberation Sans", Arial, sans-serif;
  font-size: 9px;
  shape-rendering: crispEdges;
}

.legend {
  position: absolute;
  left: 3px;
  top: 2px;
  display: flex;
  align-items: center;
  gap: 3px;
}

.legend svg {
  width: 11px;
  height: 11px;
}

.legend span {
  min-width: 204px;
  padding: 0 5px;
  background: #00008b;
  border-radius: 4px;
  color: #fff;
  font-family: "Liberation Sans", Arial, sans-serif;
  font-size: 9px;
  line-height: 12px;
}

/* informer */
.informer {
  flex: none;
}

.informer .panel-title {
  background: #b6b8c2;
}

.quotes {
  padding: 2px 2px 2px 1px;
  border: 1px solid #9a9aa2;
  background: #fff;
}

.quotes-view {
  position: relative;
  height: 147px;
  padding-left: 1px;
  overflow: hidden;
}

.rates {
  width: calc(100% - 8px);
}

.rates td:nth-child(n+2) {
  text-align: right;
}

.rates td:last-child {
  text-align: left;
}

.c-sym {
  width: 93px;
}

.c-std {
  width: 91px;
}

.c-wide {
  width: 107px;
}

.c-pct {
  width: 122px;
}

.c-last {
  width: 61px;
}

.vscroll {
  position: absolute;
  right: 0;
  top: 17px;
  bottom: 0;
  display: flex;
  flex-direction: column;
  width: 15px;
  background: #f2f2f6;
}

.vscroll button,
.hscroll button {
  flex: none;
  width: 15px;
  height: 14px;
  background: linear-gradient(#fff, #d5d5e0);
  border: 1px solid #b5b5c2;
  border-radius: 2px;
}

.vscroll button svg,
.hscroll button svg {
  width: 13px;
  height: 12px;
}

.vthumb {
  flex: none;
  height: 38px;
  margin-bottom: auto;
  background: linear-gradient(90deg, #fff, #cfcfdc);
  border: 1px solid #b5b5c2;
  border-radius: 2px;
}

.vthumb::after {
  content: '';
  display: block;
  height: 8px;
  margin: 14px 4px;
  background: repeating-linear-gradient(#999 0, #999 1px, #eee 1px, #eee 2px);
}

.hscroll {
  display: flex;
  margin-right: 14px;
}

.hthumb {
  display: grid;
  place-items: center;
  flex: 1;
  margin-right: 15px;
  background: linear-gradient(#fff, #d2d2de);
  border: 1px solid #b5b5c2;
  border-radius: 2px;
}

.hthumb::after {
  content: '';
  width: 8px;
  height: 6px;
  background: repeating-linear-gradient(90deg, #999 0, #999 1px, #eee 1px, #eee 2px);
}

.informer .tabs {
  height: 26px;
}

/* status bar */
.status {
  display: flex;
  flex: none;
  gap: 2px;
  height: 22px;
  padding: 0 1px 1px;
}

.status div {
  display: flex;
  align-items: center;
  padding: 0 4px;
  border: 1px solid #bcbcc6;
}

.status .conn {
  gap: 6px;
  width: 104px;
  padding-left: 2px;
}

.led {
  width: 11px;
  height: 11px;
  border-radius: 50%;
  background: linear-gradient(90deg, #4a6a00, #b8dc20);
}

.status .welcome {
  flex: 1;
  padding-left: 3px;
  color: #f0432a;
  font-family: "Liberation Sans", Arial, sans-serif;
}

/* taskbar */
.taskbar {
  display: flex;
  align-items: center;
  flex: none;
  height: 27px;
  background: linear-gradient(#70728c 0, #f2f2f8 2px, #c4c5d6 8px, #b0b1c6 16px, #e2e2ec);
}

.start {
  display: flex;
  align-items: center;
  gap: 4px;
  width: 97px;
  height: 27px;
  padding-left: 10px;
  background: linear-gradient(#2c7a2c, #7cc47a 4px, #44a044 12px, #2c8a2e);
  border-radius: 0 8px 8px 0;
  color: #fff;
  font-size: 17px;
  font-style: italic;
  font-weight: bold;
}

.start svg {
  width: 20px;
  height: 20px;
}

.quick {
  display: flex;
  gap: 7px;
  width: 121px;
  padding-left: 11px;
}

.quick svg {
  width: 12px;
  height: 12px;
}

.tasks {
  display: flex;
  flex: 1;
  gap: 2px;
}

.tasks button {
  display: flex;
  align-items: center;
  gap: 3px;
  width: 158px;
  height: 22px;
  padding: 0 8px;
  background: linear-gradient(#fff, #d5d6e2);
  border: 1px solid #9294a8;
  border-radius: 3px;
  white-space: nowrap;
}

.tasks svg {
  flex: none;
  width: 12px;
  height: 12px;
}

.tasks .pressed {
  background: #727889;
  color: #fff;
}

.tray {
  display: flex;
  align-items: center;
  gap: 2px;
  padding-right: 13px;
}

.tray button svg {
  width: 18px;
  height: 18px;
}

.tray .net {
  width: 12px;
  height: 12px;
}

.tray time {
  padding-left: 6px;
}
```
FILE: charts.js
```
// Candle rows: x, high, body top, body bottom, low, colour (in thirds of a pixel)
const COLORS = { g: '#14e63c', t: '#32c87d', r: '#f0461e', p: '#b8466e', v: '#8c46a0', b: '#3c82b4' };
const NAVY = '#00005a';

// lines: y, colour, thickness
const charts = [
  {
    id: 'chart1', left: 0, right: 174, top: 35, bottom: 262,
    rows: [59, 110, 136, 162, 188, 214, 240], cols: [30],
    lines: [[86, '#000', 1]],
    labels: [[60, '1,11300'], [111, '1,11100'], [137, '1,11000'], [163, '1,10900'], [189, '1,10800'], [215, '1,10700'], [241, '1,10600']],
    labelX: 178, mark: [86, '1,11195'], price: [209, '1,10725'], edge: 219, time: [32, 273, '23:00'],
    volume: '43 5,60 10,75 20,91 50,108 24,124 17,138 10,155 14,171 25,186 12,201 10,219 9,235 17,250 17,266 7,282 7,297 5,315 17,330 14,346 14,362 20,378 23,393 15,408 22,426 14,441 12,456 26,473 12,488 22,505 7',
    candles: `43 665 672 674 674 v|63 655 656 668 668 g|78 661 664 692 703 p|93 648 672 689 713 g|110 651 667 674 704 v|126 640 655 668 677 t
      |141 645 647 652 663 b|159 624 625 638 650 g|174 605 609 623 627 t|189 600 607 626 626 r|204 606 607 626 628 t|222 595 597 614 617 p
      |237 608 609 613 626 v|251 600 614 623 624 v|270 615 615 626 626 p|285 608 612 623 623 t|300 600 607 609 609 b|317 606 607 609 626 b
      |332 595 601 607 615 p|347 588 595 601 608 b|363 597 597 616 635 r|381 583 586 614 623 g|396 585 588 595 597 p|411 579 580 590 595 g
      |429 582 583 623 623 r|444 600 614 623 624 p|459 600 626 647 647 r|477 622 622 638 638 g|492 626 626 647 656 p|507 621 625 638 638 t`
  },
  {
    id: 'chart2', left: 0, right: 174, top: 40, bottom: 294,
    rows: [59, 81, 103, 125, 148, 170, 192, 214, 237, 259], cols: [45],
    lines: [[75, '#000', 1], [205, '#f5a623', 2]], dot: [152, 206, '#f0a020'],
    labels: [[60, '98,800'], [82, '98,750'], [104, '98,700'], [126, '98,650'], [149, '98,600'], [171, '98,550'], [193, '98,500'], [238, '98,400'], [260, '98,350']],
    labelX: 178, mark: [75, '98,765'], price: [213, '98,455'], edge: 219, time: [47, 305, '23:00'],
    volume: '44 4,57 15,72 12,87 9,105 13,120 24,135 12,150 8,180 4,195 6,213 18,228 4,243 4,273 6,289 4,351 4,366 25,396 6,411 7,426 6,442 6,457 6,474 4,489 4',
    candles: `45 750 751 762 767 t|60 733 739 745 768 b|75 733 733 772 778 r|90 733 739 767 767 t|108 744 744 762 779 v|123 718 739 767 785 g
      |138 733 739 745 752 b|153 691 700 734 734 g|168 690 690 701 701 p|183 685 690 700 703 p|198 673 679 691 701 t|214 664 673 675 701 b
      |231 652 652 664 664 g|246 625 625 647 647 t|261 624 625 631 631 b|276 597 604 619 619 g|291 598 599 605 605 p|305 612 612 614 614 b
      |339 598 598 605 605 b|354 592 592 619 619 p|369 624 625 641 686 r|399 646 646 659 673 r|414 651 652 664 674 p|432 625 625 658 658 t
      |447 612 614 616 616 b|461 612 615 631 631 r|477 625 625 647 647 r|492 632 639 647 647 v|507 639 639 641 641 b`
  },
  {
    id: 'chart3', left: 8, right: 712, top: 37, bottom: 214,
    rows: [79, 109, 139, 170, 200], cols: [91, 250, 409, 569], start: 22, lines: [],
    labels: [[110, '1,52000'], [141, '1,51900'], [171, '1,51800'], [201, '1,51700']],
    labelX: 716, price: [81, '1,52095'], edge: 757,
    candles: `641 632 660 670 670 b|659 624 660 670 670 b|675 565 589 670 670 g|690 573 592 670 670 p|705 615 637 670 670 g|723 633 634 670 670 g
      |738 589 616 637 643 t|753 565 592 619 628 g|771 565 589 592 592 b|786 580 580 599 626 t|801 562 574 638 638 r|832 624 660 670 670 b
      |848 636 660 670 670 b|945 625 625 670 670 g|960 606 619 670 670 p|978 637 637 670 670 p|993 615 619 670 670 g|1008 625 625 670 670 p
      |1165 636 660 670 670 b|1180 636 660 670 670 b|1215 625 625 670 670 g|1230 606 615 619 619 b|1248 592 600 610 610 b|1263 606 607 619 619 p
      |1278 591 601 616 619 t|1296 606 607 619 619 p|1311 625 625 670 670 r|1326 570 592 638 638 t|1341 561 574 590 592 g|1359 543 565 571 574 b
      |1374 507 538 564 567 t|1389 466 466 536 536 g|1407 462 472 491 494 r|1422 466 484 493 521 b|1437 457 463 482 491 t|1455 448 448 458 476 t
      |1470 415 445 447 476 b|1485 349 361 446 458 g|1500 289 316 359 377 t|1518 312 317 323 341 b|1533 178 217 314 323 g|1548 147 169 215 215 t
      |1564 147 171 173 187 b|1581 153 169 182 188 r|1596 169 178 197 206 p|1613 189 198 200 200 b|1629 190 196 233 233 r|1644 222 226 242 245 p
      |1659 226 235 245 251 t|1677 232 232 242 242 g|1692 199 205 227 242 t|1707 190 199 215 227 p|1725 190 199 209 222 g|1740 199 205 215 222 p
      |1754 205 216 218 218 b|1772 207 222 224 224 b|1788 223 226 269 271 p|1803 244 250 262 278 g|1818 235 250 254 254 b|1836 226 226 254 260 t
      |1851 217 223 242 242 r|1866 241 244 254 262 p|1882 244 258 260 270 b|1899 261 262 269 269 p|1914 252 259 272 281 t|1932 253 253 278 278 p
      |1947 271 271 280 305 p|1962 270 271 278 278 t|1977 250 253 269 278 g|1993 241 250 252 268 b|2010 259 259 281 299 p|2023 268 279 281 296 b
      |2043 255 268 277 278 g|2058 233 235 272 278 t|2072 235 240 242 314 b|2091 243 244 269 287 r|2106 241 259 262 278 b|2121 244 244 263 272 g`
  },
  {
    id: 'chart4', left: 9, right: 714, top: 251, bottom: 400,
    rows: [290, 322, 355], cols: [92, 251, 410, 569], start: 23, lines: [],
    labels: [[291, '1,36200'], [324, '1,36100'], [357, '1,36000']],
    labelX: 717, price: [312, '1,36135'], edge: 758,
    candles: `642 1095 1116 1130 1130 b|657 1095 1116 1130 1130 b|672 1086 1098 1130 1130 g|687 1083 1101 1130 1130 p|750 1095 1101 1130 1130 t
      |765 1077 1092 1130 1130 g|783 1068 1077 1116 1130 p|801 1023 1071 1130 1130 g|1328 1089 1130 1140 1140 b|1344 1054 1054 1130 1130 t
      |1362 978 1039 1045 1045 b|1377 900 934 1046 1055 g|1392 841 865 932 950 t|1410 862 862 950 956 p|1425 900 940 955 986 g|1440 946 946 964 976 p
      |1458 925 925 971 977 t|1473 909 919 986 995 r|1488 900 910 992 1004 t|1503 880 886 905 916 g|1521 886 892 902 907 r|1536 841 880 895 895 t
      |1551 832 835 878 881 g|1569 790 805 842 845 g|1584 802 811 872 880 p|1599 832 841 866 866 g|1615 841 846 848 848 b|1632 820 841 871 893 p
      |1647 871 877 893 895 p|1661 880 893 895 895 b|1679 900 901 904 904 b|1695 850 865 905 905 g|1710 850 865 887 905 p|1728 850 850 881 881 t
      |1743 850 856 880 896 r|1758 880 886 905 905 p|1776 901 901 934 934 p|1791 919 931 965 965 r|1806 940 940 971 977 t|1821 940 946 956 958 r
      |1839 961 961 971 978 p|1853 949 964 966 980 b|1869 970 970 995 1001 r|1887 970 970 992 992 g|1901 962 964 966 966 b|1917 962 970 995 995 r
      |1935 979 991 1010 1010 r|1950 991 1000 1016 1018 p|1965 1003 1003 1019 1024 g|1980 949 964 1001 1004 t|1998 961 961 976 986 p|2013 978 980 986 1004 b
      |2028 979 979 1004 1016 p|2046 949 955 1001 1010 t|2061 931 934 950 964 g|2076 900 904 932 965 t|2094 910 910 941 947 p|2109 892 910 947 947 g
      |2124 916 916 935 937 p`
  },
  {
    id: 'chart5', left: 9, right: 713, top: 38, bottom: 260,
    rows: [66, 93, 119, 146, 172, 199, 225], cols: [97, 255, 413, 570], start: 29,
    lines: [[204, '#3ad83a', 2]], dot: [696, 205, '#14f014'],
    labels: [[68, '0,77050'], [94, '0,77000'], [120, '0,76950'], [147, '0,76900'], [173, '0,76850'], [200, '0,76800'], [226, '0,76750']],
    labelX: 717, price: [218, '0,76765'], edge: 759,
    candles: `370 688 720 730 730 b|390 640 655 730 730 g|405 640 646 688 690 p|420 655 664 694 705 g|435 646 646 671 671 t|451 622 640 642 671 b
      |466 640 646 648 656 b|483 582 598 641 656 t|498 567 574 592 600 g|516 568 568 617 623 r|531 607 607 665 665 p|544 640 655 657 665 b
      |561 549 559 646 647 t|579 487 502 550 570 t|594 487 496 520 545 r|609 454 502 511 520 b|624 478 496 535 535 r|642 438 472 526 527 g
      |657 454 478 496 497 p|672 415 472 487 496 g|687 462 463 502 512 p|705 415 415 496 503 t|720 415 424 448 472 r|735 448 454 512 512 p
      |751 487 519 521 527 b|768 391 415 511 512 g|783 385 391 409 410 t|798 336 385 401 416 g|816 342 376 424 425 r|831 409 415 464 464 p
      |846 415 424 454 473 g|861 430 430 454 473 p|879 438 463 479 479 p|894 438 472 479 479 p|909 472 473 479 487 v|924 478 478 487 503 t
      |942 399 430 472 472 g|957 438 438 440 440 b|972 430 431 440 440 p|987 438 439 448 479 t|1005 337 337 430 430 t|1020 328 328 376 376 r
      |1033 385 385 387 402 b|1048 351 376 378 416 b|1068 367 367 385 391 r|1083 352 367 377 385 t|1098 361 361 377 402 g|1116 336 343 353 353 g
      |1131 352 352 368 377 p|1146 352 361 377 392 r|1159 376 385 387 432 b|1179 376 377 391 402 p|1194 367 368 385 388 g|1209 367 368 377 410 t
      |1224 367 377 401 401 r|1242 367 367 391 391 g|1257 361 362 368 368 b|1272 367 368 377 410 g|1287 352 361 377 377 t|1304 351 352 354 362 b
      |1320 361 362 368 368 p|1335 352 361 377 377 p|1348 367 367 369 369 b|1368 304 304 361 361 g|1383 289 313 320 320 p|1398 289 295 314 329 g
      |1413 289 304 344 344 p|1431 295 313 352 368 t|1446 319 319 353 362 r|1461 337 343 361 377 t|1479 319 337 361 361 p|1494 295 295 353 353 g
      |1509 289 289 305 344 p|1524 295 295 353 362 r|1542 289 304 344 344 g|1557 247 247 296 305 t|1572 168 217 242 242 g|1587 151 208 242 248 p
      |1605 223 232 257 266 p|1620 247 256 265 265 t|1635 247 265 305 305 p|1650 313 313 361 361 r|1668 361 367 386 391 r|1683 391 391 401 416 b
      |1698 352 361 391 391 g|1713 337 352 361 361 v|1729 351 352 354 368 b|1746 361 361 391 391 r|1759 385 399 401 401 b|1776 385 386 391 410 b
      |1794 391 391 448 448 r|1809 454 454 496 496 p|1824 487 487 520 520 r|1841 511 511 513 527 b|1857 487 502 617 633 p|1872 622 622 631 631 p
      |1887 607 616 622 632 b|1905 592 598 640 640 p|1920 613 631 640 640 p|1935 613 646 655 671 p|1950 631 664 730 730 r|1968 670 670 730 730 g
      |1983 631 646 664 689 t|1998 622 640 647 680 v|2013 646 646 655 665 b|2031 598 616 640 640 t|2046 574 592 608 608 t|2061 583 583 632 665 p
      |2076 607 622 665 665 r|2094 631 655 730 730 r|2109 607 607 703 703 t|2124 592 598 656 671 r`
  }
];

const px = v => Math.round(v / 3);
const rect = (x, y, w, h, fill) => `<rect x="${x}" y="${y}" width="${w}" height="${h}" fill="${fill}"/>`;
const text = (x, y, s, fill) => `<text x="${x}" y="${y + 4}" fill="${fill}">${s}</text>`;

function draw(c) {
  const w = c.right - c.left;
  const h = c.bottom - c.top;
  let out = rect(c.left, c.top, w, 1, '#c8c8c8') + rect(c.right, c.top, 1, h, '#c8c8c8');

  // grid
  c.rows.forEach(y => {
    out += `<path d="M${c.left} ${y + .5}h${w}" stroke="#c4c4c4" stroke-dasharray="1 1"/>`;
  });
  c.cols.forEach(x => {
    out += `<path d="M${x + .5} ${c.top}v${h}" stroke="#c4c4c4" stroke-dasharray="1 1"/>`;
  });
  if (c.start) {
    out += rect(c.left, c.top, 1, h, '#c8c8c8') + rect(c.start, c.top, 1, h, '#000');
  }

  // volume
  if (c.volume) {
    out += rect(c.left, c.bottom, w, 1, '#c8c8c8');
    c.volume.split(',').forEach(v => {
      const [x, vh] = v.split(' ').map(Number);
      out += rect(px(x) - 1, c.bottom - px(vh), 2, px(vh), '#b4d6de');
    });
  }

  // candles
  c.candles.split('|').forEach(row => {
    const [x, hi, top, bot, low, color] = row.trim().split(' ');
    const cx = px(x);
    const y = px(top);
    const bh = Math.max(px(bot) - y, 1);
    out += rect(cx, px(hi), 1, Math.max(px(low) - px(hi), 1), NAVY);
    out += rect(cx - 2, y, 4, bh, '#102040');
    if (bh > 2) {
      out += rect(cx - 1, y + 1, 2, bh - 2, COLORS[color]);
    }
  });

  c.lines.forEach(([y, color, size]) => {
    out += rect(c.left, y, w, size, color);
  });
  if (c.dot) {
    out += rect(c.dot[0] - 3, c.dot[1] - 2, 5, 5, c.dot[2]);
  }

  // price scale
  c.labels.forEach(([y, s]) => {
    out += text(c.labelX, y, s, '#111');
  });
  if (c.mark) {
    out += rect(c.labelX + 1, c.mark[0] - 5, c.edge - c.labelX - 1, 11, '#ffff00') + text(c.labelX + 3, c.mark[0], c.mark[1], '#111');
  }
  const [py, ps] = c.price;
  out += `<path d="M${c.right + 1} ${py}l4 -5H${c.edge}v11H${c.right + 5}z" fill="#808080"/>` + text(c.labelX + 1, py, ps, '#fff');
  if (c.time) {
    out += text(c.time[0], c.time[1] - 4, c.time[2], '#111');
  }

  document.getElementById(c.id).innerHTML = out;
}

charts.forEach(draw);
```
